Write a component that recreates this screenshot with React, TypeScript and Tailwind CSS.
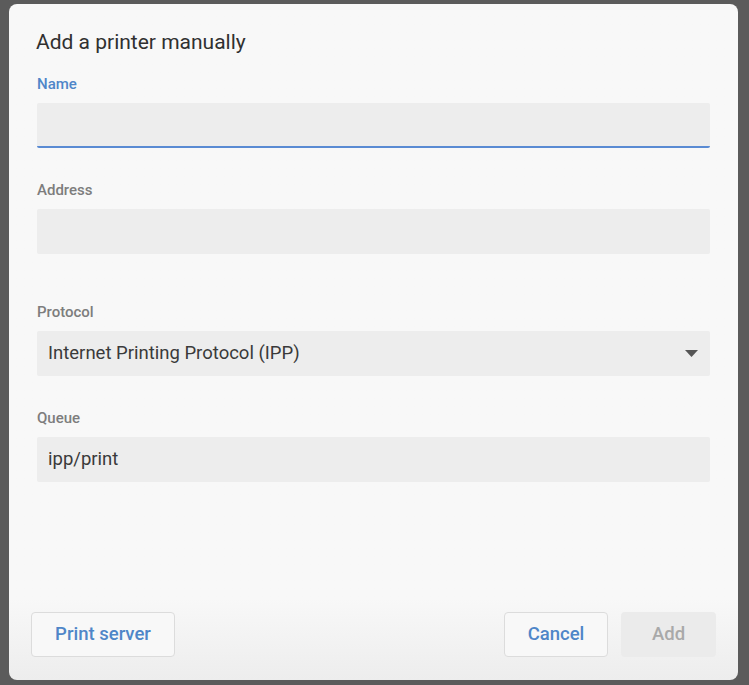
import React from "react";

const labelBase = "text-[15px] leading-[16px] font-medium";

function Field({
  label,
  active,
  children,
  className,
}: {
  label: string;
  active?: boolean;
  children?: React.ReactNode;
  className?: string;
}) {
  return (
    <div className={className}>
      <div className={`${labelBase} ${active ? "text-[#4f86c8]" : "text-[#7d7d7d]"}`}>{label}</div>
      <div
        className={`mt-[11px] h-[45px] flex items-center px-[11px] bg-[#ededed] rounded-[2px] text-[18.5px] text-[#3a3a3a] ${
          active ? "border-b-2 border-[#5a8bd3]" : ""
        }`}
      >
        {children}
      </div>
    </div>
  );
}

export default function App() {
  return (
    <div className="w-[749px] h-[685px] bg-[#5b5b5b] overflow-hidden flex" style={{ fontFamily: "Roboto, 'Liberation Sans', sans-serif" }}>
      <div className="w-[9px] shrink-0" />
      <div className="mt-[4px] w-[729px] h-[676px] rounded-[8px] bg-gradient-to-b from-[#f8f8f8] via-[#f8f8f8] via-[88%] to-[#ededed] flex flex-col px-[28px] pt-[26px] pb-[23px]">
        <h1 className="text-[21px] leading-[25px] text-[#303030] ml-[-1px]">Add a printer manually</h1>

        <Field label="Name" active className="mt-[21px]" />
        <Field label="Address" className="mt-[34px]" />
        <Field label="Protocol" className="mt-[50px]">
          <span className="flex-1">Internet Printing Protocol (IPP)</span>
          <svg width="13" height="7" viewBox="0 0 13 7" className="mr-[1px]">
            <path d="M0 0 L13 0 L6.5 7 Z" fill="#555555" />
          </svg>
        </Field>
        <Field label="Queue" className="mt-[34px]">
          ipp/print
        </Field>

        <div className="flex-1" />

        <div className="flex items-center ml-[-6px] mr-[-6px]">
          <button className="h-[45px] w-[144px] rounded-[4px] border border-[#dcdcdc] bg-[#f8f8f8] text-[18.5px] font-medium text-[#4f86c8]">
            Print server
          </button>
          <div className="flex-1" />
          <button className="h-[45px] w-[104px] rounded-[4px] border border-[#dcdcdc] bg-[#f8f8f8] text-[18.5px] font-medium text-[#4f86c8]">
            Cancel
          </button>
          <button className="ml-[13px] h-[45px] w-[95px] rounded-[4px] bg-[#ebebeb] text-[18.5px] font-medium text-[#a9a9a9]">
            Add
          </button>
        </div>
      </div>
    </div>
  );
}
